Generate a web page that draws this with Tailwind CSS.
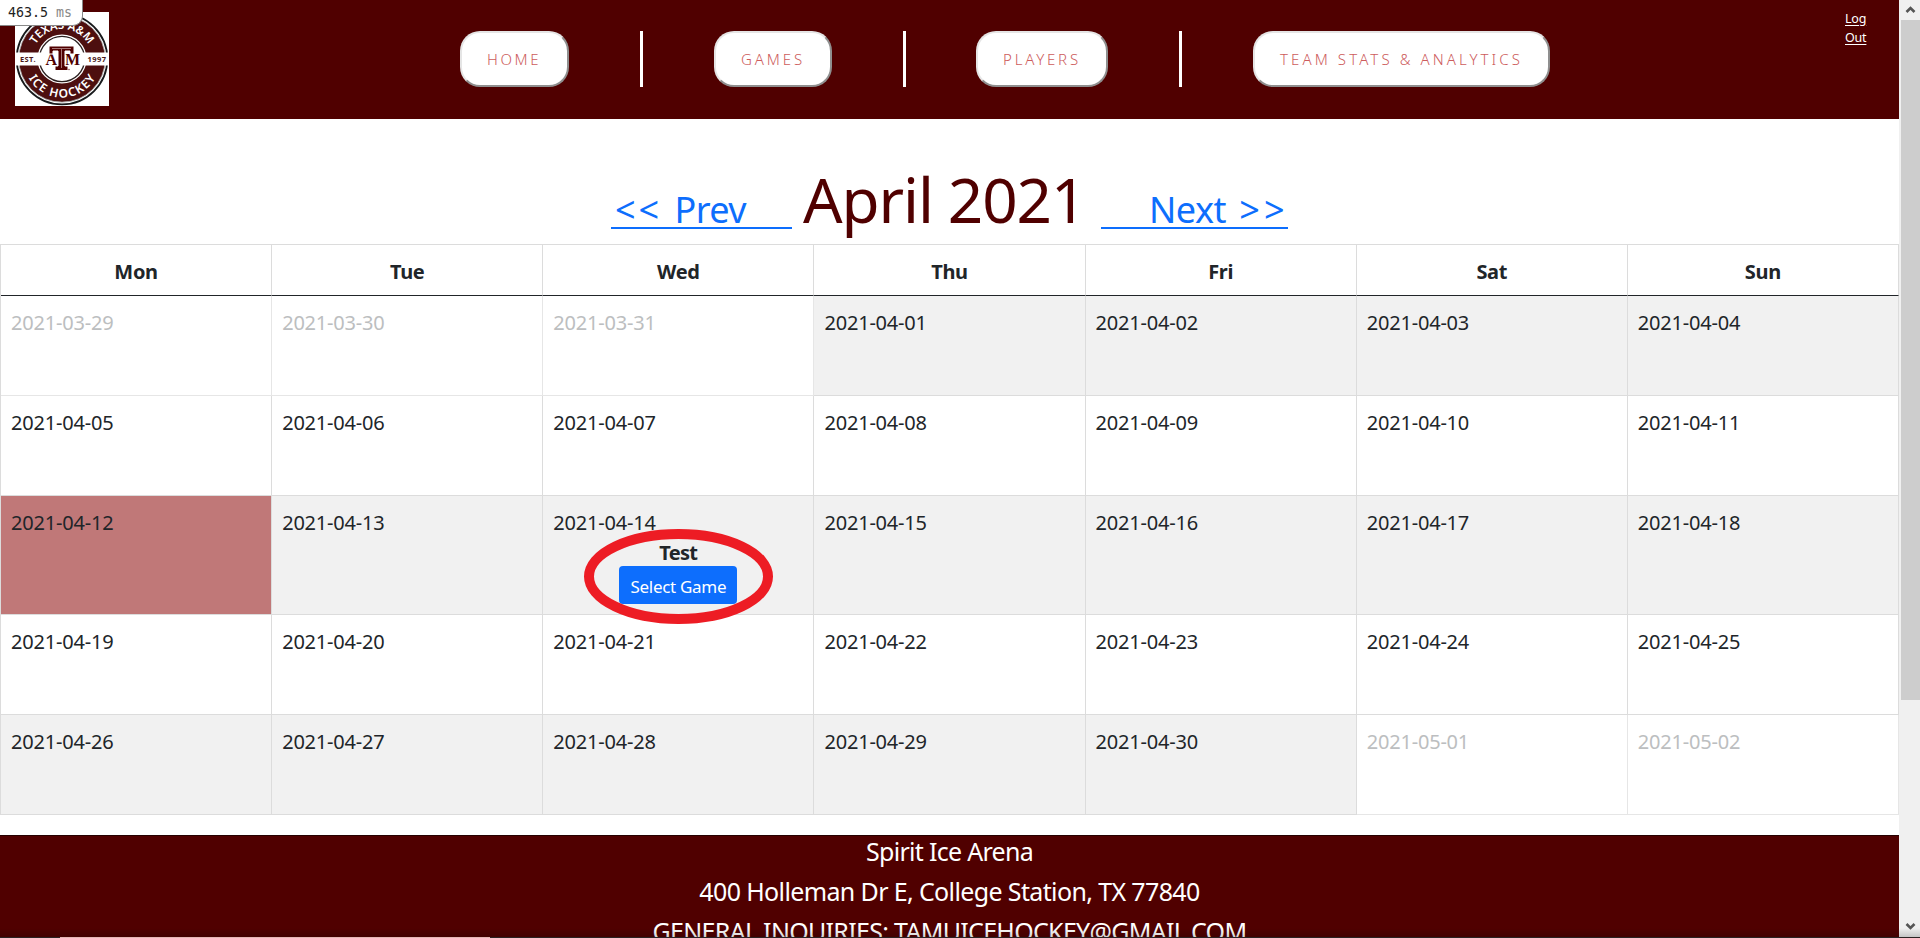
<!DOCTYPE html>
<html lang="en">
<head>
<meta charset="utf-8">
<title>Schedule</title>
<script src="https://cdn.jsdelivr.net/npm/@tailwindcss/browser@4"></script>
</head>
<body class="relative flex h-[938px] w-[1920px] overflow-hidden bg-white font-['Noto_Sans',sans-serif] text-[20px] leading-[30px] text-[#212529]">
<div class="flex h-[938px] w-[1899px] flex-col overflow-hidden">
  <header class="flex h-[119px] shrink-0 bg-[#500000]">
    <svg class="ml-[15px] mt-[12px] h-[94px] w-[94px]" viewBox="0 0 94 94">
      <rect width="94" height="94" fill="#fff"/>
      <circle cx="47" cy="47" r="45.3" fill="#fff" stroke="#17191b" stroke-width="1.8"/>
      <circle cx="47" cy="47" r="33.8" fill="none" stroke="#4d0f0f" stroke-width="18.5"/>
      <circle cx="47" cy="47" r="43.2" fill="none" stroke="#a5a5a5" stroke-width=".8"/>
      <circle cx="47" cy="47" r="22.6" fill="#fff" stroke="#2b2020" stroke-width="1.3"/>
      <path d="M0 40.4h26v13H0zM68 40.4h26v13H68z" fill="#fff"/>
      <defs>
        <path id="arcTop" d="M17 47a30 30 0 0 1 60 0"/>
        <path id="arcBottom" d="M8.500 47a38.500 38.500 0 0 0 77 0"/>
      </defs>
      <g fill="#fff" font-family="Noto Sans, sans-serif" font-weight="600" font-size="12">
        <text text-anchor="middle" font-size="11.500"><textPath href="#arcTop" startOffset="50%" textLength="64">TEXAS A&amp;M</textPath></text>
        <text text-anchor="middle"><textPath href="#arcBottom" startOffset="50%" textLength="81">ICE HOCKEY</textPath></text>
      </g>
      <g fill="#4a1616" font-family="Noto Sans, sans-serif" font-weight="700" font-size="7.5">
        <text x="5" y="49.7" textLength="15.5">EST.</text>
        <text x="72.5" y="49.7" textLength="18.5">1997</text>
      </g>
      <g fill="#500000" font-family="Liberation Serif, serif" font-weight="700">
        <text x="30.5" y="53" font-size="16" textLength="12">A</text>
        <text x="50" y="53" font-size="16" textLength="14">M</text>
      </g>
      <path d="M34 34h25v8h-4v-3h-5v15h3v4.500H40V54h3V39h-5v3h-4z" fill="#500000" stroke="#fff" stroke-width="1"/>
      <path d="M37 36.500h19M46.500 37v19" fill="none" stroke="#c9a8a8" stroke-width=".7"/>
      <circle cx="54" cy="57.500" r=".8" fill="#8b5555"/>
    </svg>
    <nav class="ml-[351px] mt-[31px] flex h-[56px] items-stretch text-[15px] font-light text-[#cd5c5c]">
      <a class="flex w-[109px] items-center whitespace-nowrap rounded-[20px] border-2 border-t-[#e5e5e5] border-l-[#e5e5e5] border-r-[#8f8f8f] border-b-[#8f8f8f] bg-white pl-[25px] tracking-[2.6px]">HOME</a>
      <i class="ml-[71px] w-[3px] bg-white"></i>
      <a class="ml-[71px] flex w-[118px] items-center whitespace-nowrap rounded-[20px] border-2 border-t-[#e5e5e5] border-l-[#e5e5e5] border-r-[#8f8f8f] border-b-[#8f8f8f] bg-white pl-[25px] tracking-[2.9px]">GAMES</a>
      <i class="ml-[71px] w-[3px] bg-white"></i>
      <a class="ml-[70px] flex w-[132px] items-center whitespace-nowrap rounded-[20px] border-2 border-t-[#e5e5e5] border-l-[#e5e5e5] border-r-[#8f8f8f] border-b-[#8f8f8f] bg-white pl-[25px] tracking-[2.8px]">PLAYERS</a>
      <i class="ml-[71px] w-[3px] bg-white"></i>
      <a class="ml-[71px] flex w-[297px] items-center whitespace-nowrap rounded-[20px] border-2 border-t-[#e5e5e5] border-l-[#e5e5e5] border-r-[#8f8f8f] border-b-[#8f8f8f] bg-white pl-[25px] tracking-[3.1px]">TEAM STATS &amp; ANALYTICS</a>
    </nav>
    <a class="ml-auto mr-[24px] mt-[9px] w-[30px] text-[12.500px] leading-[19px] tracking-[-0.2px] text-white underline underline-offset-2">Log<br>Out</a>
  </header>

  <div class="flex h-[125px] shrink-0 items-baseline pl-[611px] pt-[36px] whitespace-pre">
    <a class="w-[181px] border-b-2 border-[#0d6efd] pl-[4px] text-[36px] leading-[34px] tracking-[-0.6px] text-[#0d6efd]"><span class="tracking-[3px]">&lt;&lt; </span>Prev</a>
    <h1 class="ml-[11px] w-[298px] text-[62px] leading-[88px] tracking-[-1.1px] text-[#500000]">April 2021</h1>
    <a class="w-[187px] border-b-2 border-[#0d6efd] pl-[48px] text-[36px] leading-[34px] tracking-[-0.5px] text-[#0d6efd]">Next<span class="tracking-[4px]"> &gt;&gt;</span></a>
  </div>

  <div id="calendar" class="flex w-[1899px] shrink-0 flex-col border-t border-l border-[#dcdcdc]"></div>

  <footer class="mt-[20px] flex h-[160px] shrink-0 flex-col items-center border-t border-[#250000] bg-[#500000] text-[25px] leading-[40px] text-white">
    <p class="-mt-[5px] tracking-[-0.7px]">Spirit Ice Arena</p>
    <p class="tracking-[-0.63px]">400 Holleman Dr E, College Station, TX 77840</p>
    <p class="tracking-[-0.7px]">GENERAL INQUIRIES: TAMUICEHOCKEY@GMAIL.COM</p>
  </footer>
</div>

<aside class="flex h-[938px] w-[21px] flex-col items-center bg-[#f0f0f0] pl-px">
  <svg class="h-[20px] w-[19px]" viewBox="0 0 19 20"><path d="M5.500 12 9.500 8l4 4" fill="none" stroke="#555" stroke-width="2.600"/></svg>
  <div class="h-[680px] w-[19px] bg-[#cdcdcd]"></div>
  <svg class="mt-[216px] h-[20px] w-[19px]" viewBox="0 0 19 20"><path d="M5.500 8l4 4 4-4" fill="none" stroke="#555" stroke-width="2.600"/></svg>
</aside>

<div class="absolute left-0 top-0 h-[26px] w-[83px] whitespace-pre rounded-br-[10px] border-r border-b border-[#888] bg-white pl-[8px] font-['DejaVu_Sans_Mono',monospace] text-[13.300px] leading-[25px] text-[#222]">463.5 <span class="text-[#888]">ms</span></div>
<svg class="absolute left-[584px] top-[529px] h-[95px] w-[189px]" viewBox="0 0 189 95"><ellipse cx="94.500" cy="47.500" rx="89.500" ry="42.500" fill="none" stroke="#ed1c24" stroke-width="10"/></svg>
<div class="absolute bottom-0 left-0 h-[10px] w-[1920px] bg-linear-to-b from-black/0 to-black/20"></div>
<div class="absolute bottom-0 left-0 flex h-px w-[1920px] bg-[#2b2223]"><div class="ml-[60px] w-[430px] bg-[#e5b5b5]"></div></div>

<script>
  const cal = document.getElementById('calendar');
  const cell = 'w-[271.2px] border-r border-b ';
  let html = '<div class="flex h-[51px]">';
  for (const d of ['Mon','Tue','Wed','Thu','Fri','Sat','Sun'])
    html += '<div class="w-[271.2px] border-r border-b border-r-[#dcdcdc] border-b-[#212529] pt-[12px] text-center font-bold tracking-[-0.3px]">' + d + '</div>';
  html += '</div>';
  const day = new Date(Date.UTC(2021, 2, 29));
  for (let w = 0; w < 5; w++) {
    html += w === 2 ? '<div class="flex h-[119px]">' : '<div class="flex h-[100px]">';
    for (let i = 0; i < 7; i++) {
      const s = day.toISOString().slice(0, 10);
      const out = day.getUTCMonth() !== 3;
      let c = 'pt-[12px] pl-[10px] pr-[10px] tracking-[-0.2px] ';
      if (out) c += 'border-[#e6e6e6] text-[#bcbec0] ';
      else c += 'border-[#dcdcdc] ';
      if (s === '2021-04-12') c += 'bg-[#c07878] ';
      else if (w % 2 === 0 && !out) c += 'bg-[#f1f1f1] ';
      html += '<div class="' + cell + c + '">' + s;
      if (s === '2021-04-14')
        html += '<div class="flex flex-col items-center"><b class="-mb-[2px] tracking-[-0.7px]">Test</b><a class="flex h-[38px] w-[118px] items-center justify-center rounded-[4px] bg-[#0d6efd] pt-[3px] text-[17px] tracking-[-0.3px] text-white">Select Game</a></div>';
      html += '</div>';
      day.setUTCDate(day.getUTCDate() + 1);
    }
    html += '</div>';
  }
  cal.innerHTML = html;
</script>
</body>
</html>
